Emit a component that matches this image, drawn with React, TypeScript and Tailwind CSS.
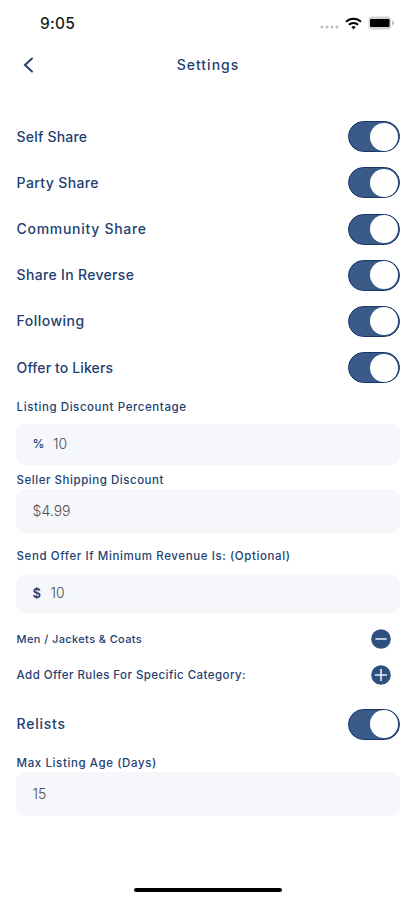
import type { ReactNode } from "react";

function StatusBar() {
  return (
    <div className="flex h-[46px] items-center justify-between pl-[40px] pr-[20px] text-black">
      <span className="pt-px text-[15.5px] font-medium leading-none tracking-[0.3px] text-[#1c1c1c]">9:05</span>
      <div className="flex items-center">
        <svg width="19" height="4" viewBox="0 0 19 4" className="mr-[6px] mt-[8px]" fill="#bdbdbd">
          <circle cx="2" cy="2" r="1.5" />
          <circle cx="7" cy="2" r="1.5" />
          <circle cx="12" cy="2" r="1.5" />
          <circle cx="17" cy="2" r="1.5" />
        </svg>
        <svg width="17" height="13" viewBox="0 0 17 13" fill="none" stroke="#000" strokeWidth="2">
          <path d="M1 4.8a10.6 10.6 0 0 1 15 0" />
          <path d="M3.9 7.8a6.5 6.5 0 0 1 9.2 0" />
          <path d="M6.4 10.1a3 3 0 0 1 4.2 0L8.5 12.4z" fill="#000" stroke="none" />
        </svg>
        <svg width="27" height="14" viewBox="0 0 27 14" className="ml-[6px]">
          <rect x="0.5" y="0.5" width="22.5" height="13" rx="3.5" fill="#d2d2d2" />
          <rect x="2" y="3" width="19.5" height="8" rx="1.2" fill="#000" />
          <path d="M24.2 4.6c2.4.8 2.4 4 0 4.8z" fill="#b5b5b5" />
        </svg>
      </div>
    </div>
  );
}

function Toggle() {
  return (
    <div className="flex h-[31px] w-[52px] items-center justify-end rounded-full border border-[#17376b] bg-[#3a5a88] pr-px">
      <div className="size-[28px] rounded-full bg-white" />
    </div>
  );
}

function ToggleRow({ children }: { children: ReactNode }) {
  return (
    <div className="flex h-[46.2px] items-center justify-between pl-[0.6px] text-[14px] font-medium leading-none">
      {children}
      <Toggle />
    </div>
  );
}

function Box({ children, className }: { children: ReactNode; className: string }) {
  return (
    <div className={`flex items-center rounded-[9px] bg-[#f5f7fb] pl-[16.6px] text-[14px] font-light leading-none text-[#4c5057] ${className}`}>
      {children}
    </div>
  );
}

function RoundIcon({ plus }: { plus?: boolean }) {
  return (
    <svg width="20" height="20" viewBox="0 0 20 20" className="mr-[9px]">
      <circle cx="10" cy="10" r="9.8" fill="#2e507f" />
      <path d={plus ? "M4.5 10h11M10 4.5v11" : "M5 10h10"} stroke="#e9eef6" strokeWidth="1.6" strokeLinecap="round" />
    </svg>
  );
}

export default function App() {
  return (
    <div className="flex h-[900px] w-[415px] flex-col bg-white font-['Inter',sans-serif] text-[#233f72]">
      <StatusBar />
      <header className="grid h-[38px] grid-cols-[1fr_auto_1fr] items-center pl-[23px] pr-[22px]">
        <svg width="12" height="16" viewBox="0 0 12 16" fill="none" stroke="#233f72" strokeWidth="2" strokeLinecap="round">
          <path d="M9 1.5 2 8l7 6.5" />
        </svg>
        <h1 className="text-[14px] font-medium leading-none tracking-[1px]">Settings</h1>
      </header>

      <main className="flex flex-col pl-[16px] pr-[15px] pt-[29.6px]">
        <ToggleRow><span className="tracking-[0.2px]">Self Share</span></ToggleRow>
        <ToggleRow><span className="tracking-[0.38px]">Party Share</span></ToggleRow>
        <ToggleRow><span className="tracking-[0.7px]">Community Share</span></ToggleRow>
        <ToggleRow><span className="tracking-[0.32px]">Share In Reverse</span></ToggleRow>
        <ToggleRow><span className="tracking-[0.47px]">Following</span></ToggleRow>
        <ToggleRow><span className="tracking-[0.12px]">Offer to Likers</span></ToggleRow>

        <div className="flex flex-col text-[11.5px] font-medium leading-none">
          <div className="flex h-[33.2px] items-center pl-[0.6px] pt-px"><span className="tracking-[0.58px]">Listing Discount Percentage</span></div>
          <Box className="h-[41px]">
            <span className="text-[12px] font-medium text-[#233f72]">%</span>
            <span className="ml-[8.5px]">10</span>
          </Box>
          <div className="flex h-[24px] items-center pl-[0.6px] pt-[8px]"><span className="tracking-[0.54px]">Seller Shipping Discount</span></div>
          <Box className="h-[44px]">$4.99</Box>
          <div className="flex h-[41px] items-center pl-[0.6px] pt-[7px]"><span className="tracking-[0.6px]">Send Offer If Minimum Revenue Is: (Optional)</span></div>
          <Box className="h-[39px]">
            <span className="text-[13px] font-semibold text-[#233f72]">$</span>
            <span className="ml-[9.5px]">10</span>
          </Box>
          <div className="mt-[8px] flex h-[36px] items-center justify-between pl-[0.6px] text-[11px]">
            <span className="pt-px tracking-[0.38px]">Men / Jackets &amp; Coats</span>
            <RoundIcon />
          </div>
          <div className="flex h-[36px] items-center justify-between pl-[0.6px]">
            <span className="pt-px tracking-[0.44px]">Add Offer Rules For Specific Category:</span>
            <RoundIcon plus />
          </div>
        </div>

        <div className="mt-[8px]">
          <ToggleRow><span className="tracking-[0.75px]">Relists</span></ToggleRow>
        </div>
        <div className="flex h-[25px] items-center pl-[0.6px] pt-[9px] text-[11.5px] font-medium leading-none"><span className="tracking-[0.6px]">Max Listing Age (Days)</span></div>
        <Box className="h-[44px]">15</Box>
      </main>

      <div className="mb-[8px] ml-px mt-auto h-[4px] w-[148px] self-center rounded-full bg-black" />
    </div>
  );
}
